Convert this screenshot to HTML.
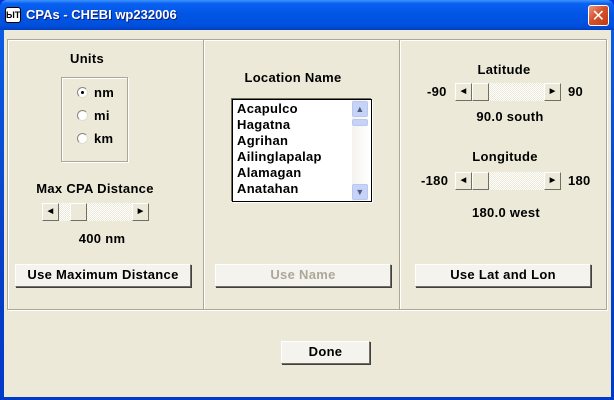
<!DOCTYPE html>
<html><head><style>
*{margin:0;padding:0;box-sizing:border-box}
body{width:614px;height:400px;overflow:hidden;font-family:"Liberation Sans",sans-serif;font-weight:bold;font-size:13px;letter-spacing:0.3px;color:#000;position:relative;background:#0831d9}
.win{position:absolute;left:0;top:0;width:614px;height:400px;background:linear-gradient(#0a5fe8,#0842c8 60%,#003ac8);border-radius:7px 7px 0 0}
.title{position:absolute;left:0;top:0;width:614px;height:30px;border-radius:7px 7px 0 0;background:linear-gradient(#3d95ff 0%,#0a60f0 12%,#0055e5 50%,#0050dd 85%,#003fc0 100%)}
.title span{position:absolute;left:26px;top:7px;color:#fff;font-size:13px;letter-spacing:0;font-weight:bold;text-shadow:1px 1px #0a1e80}
.ico{position:absolute;left:5px;top:7px;width:16px;height:16px;background:#fff;border:1px solid #000;border-radius:3px;font-size:9px;letter-spacing:0;line-height:14px;text-align:center;color:#000}
.close{position:absolute;left:588px;top:5px;width:21px;height:21px;border:1px solid #fff;border-radius:3px;background:linear-gradient(135deg,#e89a80,#d6502c 45%,#c03a10);color:#fff;font-size:16px;line-height:19px;text-align:center;font-family:"DejaVu Sans",sans-serif}
.client{position:absolute;left:4px;top:30px;width:607px;height:367px;background:#ece9d8}
.abs{position:absolute}
.etch{position:absolute;border:1px solid #aca899;box-shadow:1px 1px 0 #fff, inset 1px 1px 0 #fff}
.vl{position:absolute;width:1px;background:#aca899;box-shadow:1px 0 0 #fff}
.t{position:absolute;white-space:nowrap;transform:translateX(-50%)}
.btn{position:absolute;height:23px;background:#f4f3ee;border:1px solid #fff;border-right-color:#716f64;border-bottom-color:#716f64;box-shadow:1px 1px 0 #404040;text-align:center;line-height:20px}
.radio{position:absolute;width:11px;height:11px;border-radius:50%;background:#fff;border:1px solid #8a877a;border-right-color:#e0ddd0;border-bottom-color:#e0ddd0}
.sb{position:absolute;height:18px;background:repeating-conic-gradient(#fff 0 25%,#ece9d8 0 50%) 0 0/2px 2px}
.sbb{position:absolute;top:0;width:17px;height:18px;background:#ece9d8;border:1px solid #fff;border-right-color:#716f64;border-bottom-color:#716f64;font-size:7px;line-height:16px;text-align:center;letter-spacing:0}
.list{position:absolute;left:228px;top:69px;width:140px;height:103px;background:#fff;border:1px solid #000;box-shadow:-1px -1px 0 #716f64,1px 1px 0 #fff}
.list div{position:absolute;left:4px}
</style></head><body>
<div class="win"></div>
<div class="title"><div class="ico">ЫТ</div><span>CPAs - CHEBI wp232006</span><div class="close">✕</div></div>
<div class="client">
<div class="etch" style="left:3px;top:9px;width:600px;height:271px"></div>
<div class="vl" style="left:199px;top:10px;height:269px"></div>
<div class="vl" style="left:395px;top:10px;height:269px"></div>

<div class="t" style="left:83px;top:21px">Units</div>
<div class="etch" style="left:57px;top:47px;width:67px;height:85px"></div>
<div class="radio" style="left:73px;top:57px"><div style="position:absolute;left:3px;top:3px;width:3px;height:3px;background:#000;border-radius:50%"></div></div>
<div class="abs" style="left:90px;top:55px">nm</div>
<div class="radio" style="left:73px;top:80px"></div>
<div class="abs" style="left:90px;top:78px">mi</div>
<div class="radio" style="left:73px;top:103px"></div>
<div class="abs" style="left:90px;top:101px">km</div>
<div class="t" style="left:91px;top:151px">Max CPA Distance</div>
<div class="sb" style="left:38px;top:173px;width:107px"><div class="sbb" style="left:0">◀</div><div class="sbb" style="left:28px;width:17px"></div><div class="sbb" style="left:90px">▶</div></div>
<div class="t" style="left:98px;top:201px">400 nm</div>
<div class="btn" style="left:11px;top:234px;width:176px">Use Maximum Distance</div>

<div class="t" style="left:289px;top:40px">Location Name</div>
<div class="list">
<div style="top:1px">Acapulco</div><div style="top:17px">Hagatna</div><div style="top:33px">Agrihan</div><div style="top:49px">Ailinglapalap</div><div style="top:65px">Alamagan</div><div style="top:81px">Anatahan</div>
<div style="left:119px;top:0;width:18px;height:101px;background:linear-gradient(90deg,#f4f3ee,#fff)"></div>
<div style="left:119px;top:1px;width:16px;height:16px;background:#c6d3f7;border:1px solid #b8c8f2;border-radius:2px;color:#4d6185;font-size:9px;text-align:center;line-height:14px">▲</div>
<div style="left:119px;top:19px;width:16px;height:7px;background:#c6d3f7;border:1px solid #b8c8f2;border-radius:2px"></div>
<div style="left:119px;top:84px;width:16px;height:16px;background:#c6d3f7;border:1px solid #b8c8f2;border-radius:2px;color:#4d6185;font-size:9px;text-align:center;line-height:14px">▼</div>
</div>
<div class="btn" style="left:211px;top:234px;width:176px;color:#aca899">Use Name</div>

<div class="t" style="left:500px;top:32px">Latitude</div>
<div class="abs" style="left:423px;top:54px">-90</div>
<div class="sb" style="left:451px;top:53px;width:106px"><div class="sbb" style="left:0">◀</div><div class="sbb" style="left:17px"></div><div class="sbb" style="left:89px">▶</div></div>
<div class="abs" style="left:564px;top:54px">90</div>
<div class="t" style="left:506px;top:79px">90.0 south</div>
<div class="t" style="left:501px;top:119px">Longitude</div>
<div class="abs" style="left:417px;top:143px">-180</div>
<div class="sb" style="left:451px;top:142px;width:106px"><div class="sbb" style="left:0">◀</div><div class="sbb" style="left:17px"></div><div class="sbb" style="left:89px">▶</div></div>
<div class="abs" style="left:564px;top:143px">180</div>
<div class="t" style="left:502px;top:175px">180.0 west</div>
<div class="btn" style="left:411px;top:234px;width:176px">Use Lat and Lon</div>

<div class="btn" style="left:277px;top:311px;width:89px">Done</div>
</div>
</body></html>
